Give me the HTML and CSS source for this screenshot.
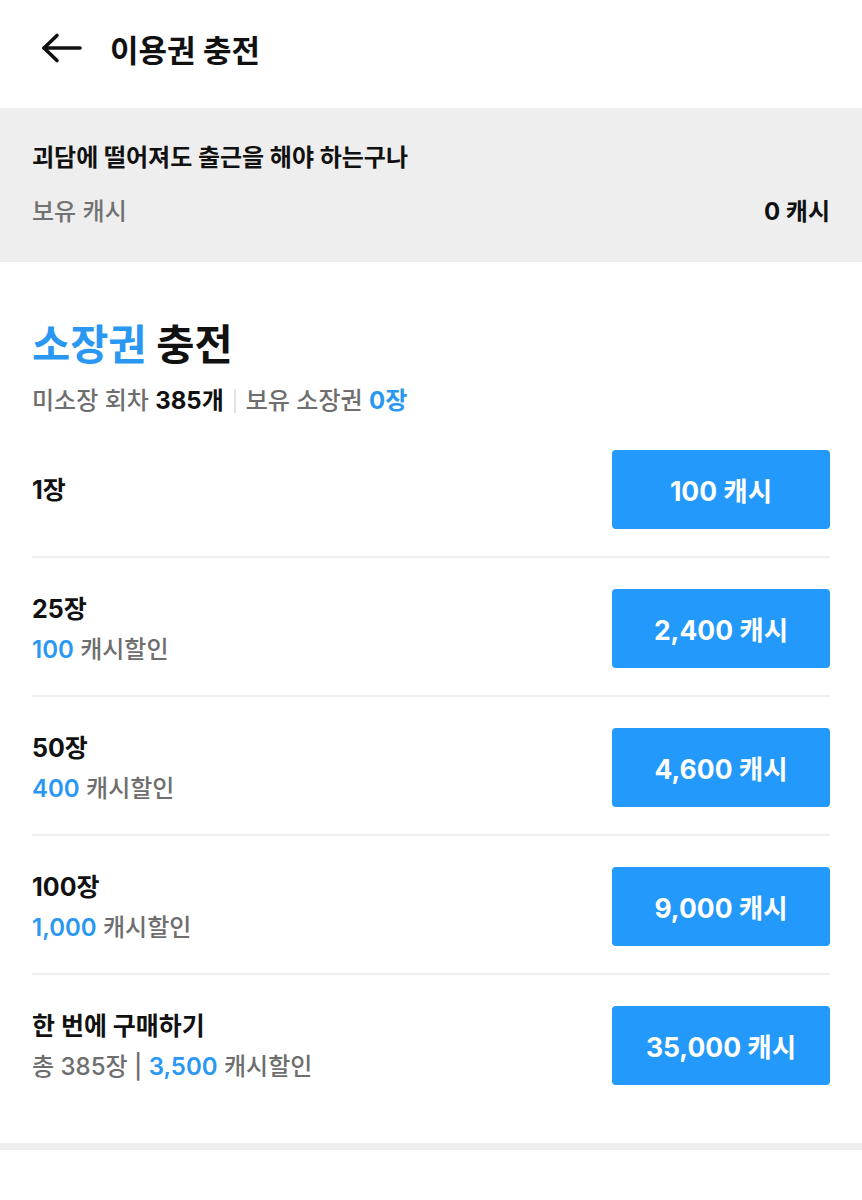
FILE: index.html
```html
<!DOCTYPE html>
<html lang="ko">
<head>
    <meta charset="UTF-8">
    <meta name="viewport" content="width=device-width, initial-scale=1.0">
    <title>이용권 충전</title>
    <link rel="stylesheet" href="styles.css">
</head>
<body>
    <header class="topbar">
        <button class="back" aria-label="뒤로">
            <svg width="42" height="40" viewBox="0 0 42 40" fill="none" stroke="#111" stroke-width="3.6" stroke-linecap="round" stroke-linejoin="round">
                <path d="M40 20H4"/>
                <path d="M17 7.5L4 20l13 12.5"/>
            </svg>
        </button>
        <h1>이용권 충전</h1>
    </header>

    <section class="summary">
        <div class="work-title">괴담에 떨어져도 출근을 해야 하는구나</div>
        <div class="cash-row">
            <span class="cash-label">보유 캐시</span>
            <span class="cash-value">0 캐시</span>
        </div>
    </section>

    <section class="charge">
        <h2><span class="accent">소장권</span> 충전</h2>
        <div class="meta">
            미소장 회차&nbsp;<b>385개</b><span class="bar"></span>보유 소장권&nbsp;<b class="accent">0장</b>
        </div>

        <ul class="options">
            <li class="option">
                <div class="info">
                    <div class="name">1장</div>
                </div>
                <button class="buy">100 캐시</button>
            </li>
            <li class="option">
                <div class="info">
                    <div class="name">25장</div>
                    <div class="discount"><b>100</b> 캐시할인</div>
                </div>
                <button class="buy">2,400 캐시</button>
            </li>
            <li class="option">
                <div class="info">
                    <div class="name">50장</div>
                    <div class="discount"><b>400</b> 캐시할인</div>
                </div>
                <button class="buy">4,600 캐시</button>
            </li>
            <li class="option">
                <div class="info">
                    <div class="name">100장</div>
                    <div class="discount"><b>1,000</b> 캐시할인</div>
                </div>
                <button class="buy">9,000 캐시</button>
            </li>
            <li class="option">
                <div class="info">
                    <div class="name">한 번에 구매하기</div>
                    <div class="discount">총 385장 | <b>3,500</b> 캐시할인</div>
                </div>
                <button class="buy">35,000 캐시</button>
            </li>
        </ul>
    </section>
    <div class="divider"></div>
</body>
</html>
```

FILE: styles.css
```css
* {
    box-sizing: border-box;
}
body {
    margin: 0;
    background: #fff;
    color: #111;
    font-family: Inter, "Noto Sans CJK KR", sans-serif;
}
.accent {
    color: #2a98f2;
}
.topbar {
    height: 108px;
    display: flex;
    align-items: center;
    padding: 0 0 12px 40px;
}
.back {
    background: none;
    border: none;
    padding: 0;
    width: 42px;
    height: 40px;
    margin-right: 28px;
    display: flex;
}
.topbar h1 {
    margin: 0;
    font-size: 31px;
    font-weight: 700;
}
.summary {
    background: #eeeeee;
    height: 154px;
    padding: 34px 32px 0;
}
.work-title {
    font-size: 24px;
    font-weight: 700;
    line-height: 32px;
}
.cash-row {
    display: flex;
    justify-content: space-between;
    margin-top: 22px;
    font-size: 24px;
    line-height: 32px;
}
.cash-label {
    color: #727272;
    font-weight: 500;
}
.cash-value {
    font-weight: 700;
}
.charge {
    padding: 58px 32px 0;
}
.charge h2 {
    margin: 0;
    font-size: 41.5px;
    font-weight: 700;
    line-height: 50px;
}
.meta {
    margin-top: 16px;
    font-size: 24px;
    line-height: 30px;
    color: #6e6e6e;
    font-weight: 500;
    display: flex;
    align-items: center;
}
.meta b {
    color: #111;
    font-weight: 700;
}
.meta b.accent {
    color: #2a98f2;
}
.bar {
    display: inline-block;
    width: 2px;
    height: 24px;
    background: #e2e2e2;
    margin: 0 10px;
}
.options {
    list-style: none;
    margin: 3px 0 0;
    padding: 0;
}
.option {
    display: flex;
    justify-content: space-between;
    align-items: center;
    padding: 31px 0 27px;
    border-bottom: 2px solid #f0f0f0;
}
.option:last-child {
    border-bottom: none;
    padding-bottom: 58px;
}
.name {
    font-size: 25px;
    font-weight: 700;
    line-height: 34px;
}
.discount {
    margin-top: 8px;
    font-size: 24px;
    line-height: 32px;
    color: #6e6e6e;
    font-weight: 500;
}
.discount b {
    color: #2a98f2;
    font-weight: 600;
}
.buy {
    width: 218px;
    height: 79px;
    border: none;
    border-radius: 4px;
    background: #2399fb;
    color: #fff;
    font-family: inherit;
    font-size: 26.5px;
    font-weight: 700;
    cursor: pointer;
}
.divider {
    height: 7px;
    background: #eeeeee;
}
```
